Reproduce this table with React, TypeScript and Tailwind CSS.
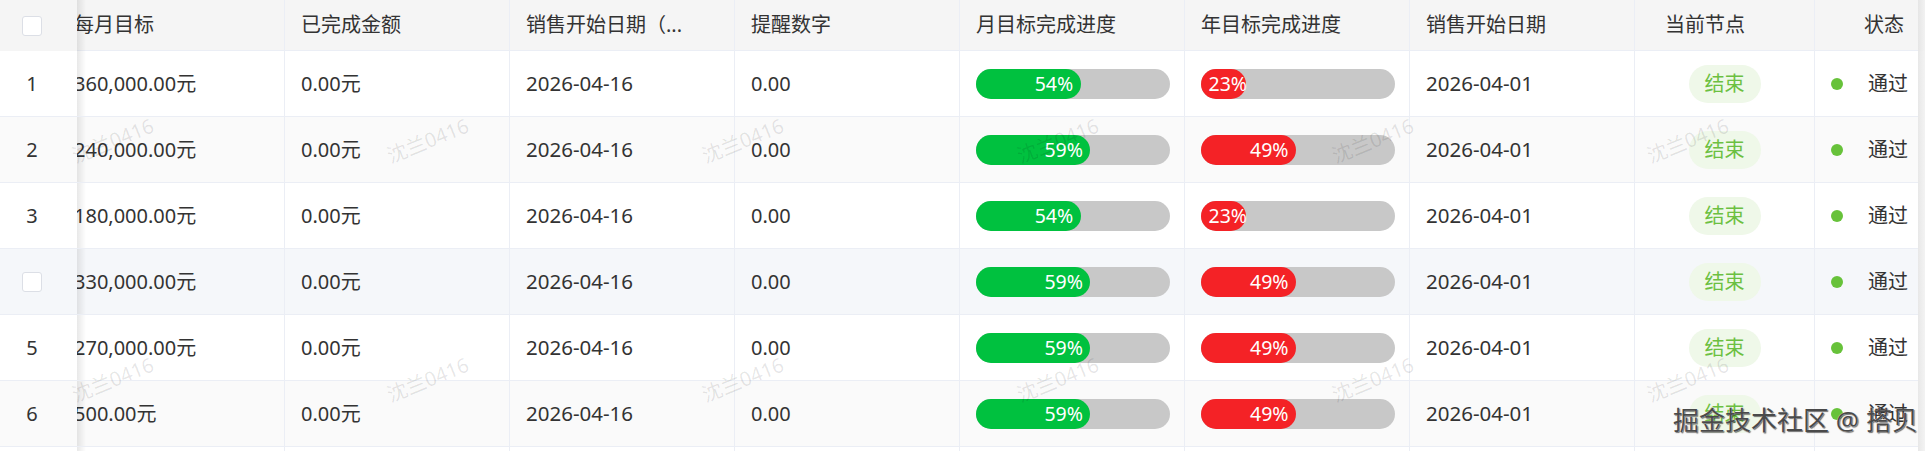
import React from "react";

type Row = { idx: number; target: string; m: number; y: number; bg: string };

const rows: Row[] = [
  { idx: 1, target: "360,000.00元", m: 54, y: 23, bg: "bg-white" },
  { idx: 2, target: "240,000.00元", m: 59, y: 49, bg: "bg-[#fafafa]" },
  { idx: 3, target: "180,000.00元", m: 54, y: 23, bg: "bg-white" },
  { idx: 4, target: "330,000.00元", m: 59, y: 49, bg: "bg-[#f5f7fa]" },
  { idx: 5, target: "270,000.00元", m: 59, y: 49, bg: "bg-white" },
  { idx: 6, target: "500.00元", m: 59, y: 49, bg: "bg-[#fafafa]" },
];

const FONT = '"Noto Sans", "Noto Sans CJK SC", sans-serif';

function Checkbox() {
  return <div className="w-[20px] h-[20px] rounded-[3px] border border-[#dcdfe6] bg-white" />;
}

function Progress({ value, color }: { value: number; color: string }) {
  return (
    <div className="w-[194px] h-[30px] rounded-full bg-[#c8c8c8] flex">
      <div
        className={`h-full rounded-full ${color} text-right whitespace-nowrap leading-[30px]`}
        style={{ width: `${value}%` }}
      >
        <span className="inline-block mx-[7.5px] text-white text-[19.5px] align-top">{value}%</span>
      </div>
    </div>
  );
}

const cellBase = "border-r border-[#ebeef5] flex items-center";

function IndexCell({ children, bg }: { children: React.ReactNode; bg: string }) {
  return (
    <div className={`relative z-10 ${bg} flex items-center pl-[22px]`}>
      {children}
      <div className="absolute top-0 bottom-0 right-[-9px] w-[9px] bg-gradient-to-r from-black/[0.09] to-transparent" />
    </div>
  );
}

export default function App() {
  const marks: { x: number; y: number }[] = [];
  for (const y of [141, 380]) for (let k = 0; k < 6; k++) marks.push({ x: 113 + 315 * k, y });

  return (
    <div
      className="relative w-[1925px] h-[451px] overflow-hidden bg-white text-[#333] text-[20px]"
      style={{ fontFamily: FONT }}
    >
      <div className="grid grid-cols-[77px_208px_225px_225px_225px_225px_225px_225px_180px_103px_7px] auto-rows-min">
        {/* header */}
        <div className="contents">
          <IndexCell bg="bg-[#f5f5f5]">
            <Checkbox />
          </IndexCell>
          {[
            "每月目标",
            "已完成金额",
            "销售开始日期（...",
            "提醒数字",
            "月目标完成进度",
            "年目标完成进度",
            "销售开始日期",
          ].map((t, i) => (
            <div
              key={t}
              className={`h-[51px] bg-[#f5f5f5] border-b border-[#ebeef5] ${cellBase} overflow-hidden ${
                i === 0 ? "pl-0" : "pl-[16px]"
              }`}
            >
              <span className={`whitespace-nowrap ${i === 0 ? "ml-[-3px]" : ""}`}>{t}</span>
            </div>
          ))}
          <div className={`h-[51px] bg-[#f5f5f5] border-b border-[#ebeef5] ${cellBase} pl-[30px]`}>当前节点</div>
          <div className={`h-[51px] bg-[#f5f5f5] border-b border-[#ebeef5] flex items-center pl-[49px]`}>状态</div>
          <div className="h-[51px] bg-gradient-to-r from-[#e6e6e6] to-[#f2f2f2]" />
        </div>

        {rows.map((r) => (
          <div key={r.idx} className="contents">
            <IndexCell bg={`${r.bg} h-[66px] border-b border-[#ebeef5]`}>
              {r.idx === 4 ? (
                <Checkbox />
              ) : (
                <span className="w-[20px] text-center">{r.idx}</span>
              )}
            </IndexCell>
            <div className={`h-[66px] ${r.bg} border-b border-[#ebeef5] ${cellBase} overflow-hidden`}>
              <span className="ml-[-3px] whitespace-nowrap">{r.target}</span>
            </div>
            <div className={`h-[66px] ${r.bg} border-b border-[#ebeef5] ${cellBase} pl-[16px]`}>0.00元</div>
            <div className={`h-[66px] ${r.bg} border-b border-[#ebeef5] ${cellBase} pl-[16px] text-[20.5px]`}>2026-04-16</div>
            <div className={`h-[66px] ${r.bg} border-b border-[#ebeef5] ${cellBase} pl-[16px]`}>0.00</div>
            <div className={`h-[66px] ${r.bg} border-b border-[#ebeef5] ${cellBase} pl-[16px]`}>
              <Progress value={r.m} color="bg-[#00c13f]" />
            </div>
            <div className={`h-[66px] ${r.bg} border-b border-[#ebeef5] ${cellBase} pl-[16px]`}>
              <Progress value={r.y} color="bg-[#f42226]" />
            </div>
            <div className={`h-[66px] ${r.bg} border-b border-[#ebeef5] ${cellBase} pl-[16px] text-[20.5px]`}>2026-04-01</div>
            <div className={`h-[66px] ${r.bg} border-b border-[#ebeef5] ${cellBase} justify-center`}>
              <span className="h-[38px] px-[16px] rounded-full bg-[#eff8e9] text-[#6cc041] flex items-center">结束</span>
            </div>
            <div className={`h-[66px] ${r.bg} border-b border-[#ebeef5] flex items-center pl-[16px]`}>
              <span className="w-[12px] h-[12px] rounded-full bg-[#67c23a]" />
              <span className="ml-[25px]">通过</span>
            </div>
            <div className="h-[66px] bg-gradient-to-r from-[#e8e8e8] to-[#f3f3f3]" />
          </div>
        ))}

        {/* partial next row */}
        <div className="contents">
          <IndexCell bg="bg-white h-[66px]">
            <span />
          </IndexCell>
          {Array.from({ length: 8 }).map((_, i) => (
            <div key={i} className={`h-[66px] bg-white ${cellBase}`} />
          ))}
          <div className="h-[66px] bg-white" />
          <div className="h-[66px] bg-gradient-to-r from-[#e8e8e8] to-[#f3f3f3]" />
        </div>
      </div>

      {/* watermarks */}
      <div className="pointer-events-none absolute inset-0 z-20">
        {marks.map((p, i) => (
          <div
            key={i}
            className="absolute text-[20px] text-black/[0.1] whitespace-nowrap -translate-x-1/2 -translate-y-1/2 -rotate-[22deg]"
            style={{ left: p.x, top: p.y }}
          >
            沈兰0416
          </div>
        ))}
        <div
          className="absolute left-[1673px] top-[402px] text-[26px] leading-[36px] text-[#4a4a4a] whitespace-nowrap [text-shadow:0_0_1px_#fff,1px_1px_1px_rgba(0,0,0,0.6)]"
        >
          掘金技术社区 @ 搭贝
        </div>
      </div>
    </div>
  );
}
